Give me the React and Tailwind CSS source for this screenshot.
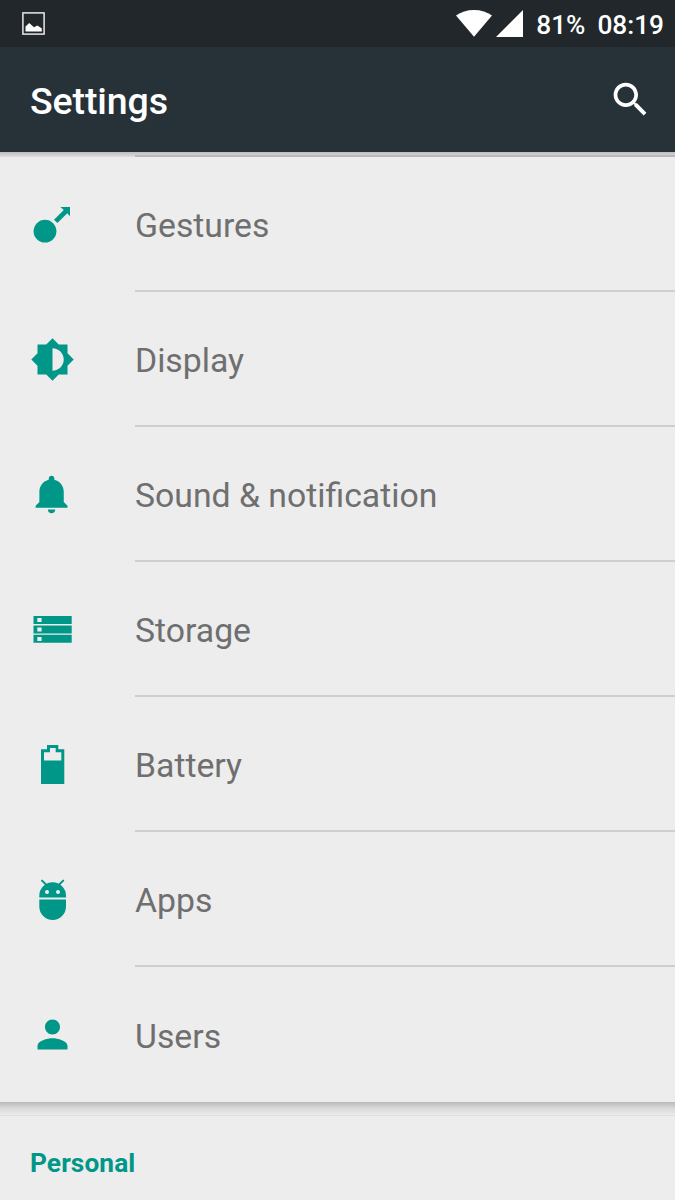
import React from "react";

function Icon({ children, unit = 45 }) {
  return (
    <svg className="size-[45px] shrink-0 fill-[#009688]" viewBox={`0 0 ${unit} ${unit}`} aria-hidden="true">
      {children}
    </svg>
  );
}

const items = [
  {
    label: "Gestures",
    icon: (
      <Icon>
        <circle cx="15" cy="29.2" r="11.4" />
        <path d="M30.4 5H40v9.3l-2.7-3L27.4 21.1 24 17.7 33.8 8.1z" />
      </Icon>
    ),
  },
  {
    label: "Display",
    icon: (
      <Icon unit={24}>
        <path d="M20 15.31L23.31 12 20 8.69V4h-4.69L12 .69 8.69 4H4v4.69L.69 12 4 15.31V20h4.69L12 23.31 15.31 20H20v-4.69zM12 18V6c3.31 0 6 2.69 6 6s-2.69 6-6 6z" />
      </Icon>
    ),
  },
  {
    label: "Sound & notification",
    icon: (
      <Icon unit={24}>
        <path d="M11.5 22c1.1 0 2-.9 2-2h-4c0 1.1.9 2 2 2zm6.5-6v-5.5c0-3.07-2.13-5.64-5-6.32V3.5c0-.83-.67-1.5-1.5-1.5S10 2.67 10 3.5v.68c-2.87.68-5 3.25-5 6.32V16l-2 2v1h17v-1l-2-2z" />
      </Icon>
    ),
  },
  {
    label: "Storage",
    icon: (
      <Icon>
        <path
          fillRule="evenodd"
          d="M3.5 9h38.2v8H3.5zM7.3 11v4h4.3v-4zM3.5 18.4h38.2v8H3.5zM7.3 20.4v4.2h4.3v-4.2zM3.5 27.8h38.2v8H3.5zM7.3 30v4h4.3v-4z"
        />
      </Icon>
    ),
  },
  {
    label: "Battery",
    icon: (
      <Icon>
        <path fillRule="evenodd" d="M17 3h11.3v4.2h6V42H11V7.2h6zM20 6v4.2h-6v8.2h17.3v-8.2h-5.6V6z" />
      </Icon>
    ),
  },
  {
    label: "Apps",
    icon: (
      <Icon>
        <path
          fillRule="evenodd"
          d="M9.3 20.4v-1.8a13.35 13.35 0 0 1 26.7 0v1.8zM15 15a2 2 0 1 0 4 0a2 2 0 1 0-4 0zM26 15a2 2 0 1 0 4 0a2 2 0 1 0-4 0z"
        />
        <path d="M9.3 22.4H36v7.2a13.35 13.35 0 0 1-26.7 0z" />
        <path className="stroke-[#009688]" strokeWidth="2" strokeLinecap="round" d="M12 3.6l4 3.8M33.2 3.6l-4 3.8" />
      </Icon>
    ),
  },
  {
    label: "Users",
    icon: (
      <Icon unit={24}>
        <path d="M12 12c2.21 0 4-1.79 4-4s-1.79-4-4-4-4 1.79-4 4 1.79 4 4 4zm0 2c-2.67 0-8 1.34-8 4v2h16v-2c0-2.66-5.33-4-8-4z" />
      </Icon>
    ),
  },
];

function StatusBar() {
  return (
    <div className="flex h-[47px] items-center bg-[#21272b] pl-[22px] pr-[11px] text-white">
      <svg className="size-[23px]" viewBox="0 0 23 23" aria-hidden="true">
        <rect x="0.9" y="0.9" width="21.2" height="21.2" fill="none" stroke="#e8e9ea" strokeWidth="1.5" />
        <path fill="#fff" d="M3.5 19.6v-5.2l3.7-3.4 4.8 4.2 3.4-1.8 4.4 3v3.2z" />
      </svg>
      <svg className="ml-auto h-[27px] w-[36px]" viewBox="0 0 36 27" aria-hidden="true">
        <path fill="#fff" d="M18 26.7L0 5.6C5 2 11 0 18 0s13 2 18 5.6z" />
      </svg>
      <svg className="ml-[4px] mr-[13px] size-[27px]" viewBox="0 0 27 27" aria-hidden="true">
        <path fill="#fff" d="M0 27L27 0v27z" />
      </svg>
      <span className="mr-[12px] pt-[3px] text-[26.25px] font-medium leading-none">81%</span>
      <span className="pt-[3px] text-[26.25px] font-medium leading-none">08:19</span>
    </div>
  );
}

export default function App() {
  return (
    <div className="flex h-[1200px] w-[675px] flex-col overflow-hidden bg-[#ededed] font-['Roboto',sans-serif]">
      <StatusBar />
      <header className="flex h-[105px] items-center justify-between bg-[#263238] pl-[30px] pr-[22.5px] text-white">
        <h1 className="pt-[4px] text-[37.5px] font-medium leading-none tracking-[-0.1px]">Settings</h1>
        <svg className="size-[45px] fill-white" viewBox="0 0 24 24" aria-label="Search">
          <path d="M15.5 14h-.79l-.28-.27C15.41 12.59 16 11.11 16 9.5 16 5.91 13.09 3 9.5 3S3 5.91 3 9.5 5.91 16 9.5 16c1.61 0 3.09-.59 4.23-1.57l.27.28v.79l5 4.99L20.49 19l-4.99-5zm-6 0C7.01 14 5 11.99 5 9.5S7.01 5 9.5 5 14 7.01 14 9.5 11.99 14 9.5 14z" />
        </svg>
      </header>
      <div className="flex h-[5px] flex-col justify-end bg-linear-to-b from-[#bebebe] to-[#dedede]">
        <div className="ml-[135px] h-[2px] bg-[#b9b9b9]" />
      </div>
      <ul className="flex flex-col">
        {items.map((item, i) => (
          <li key={item.label} className="flex h-[135px] pl-[30px]">
            <div className="flex w-[105px] items-center">{item.icon}</div>
            <div
              className={
                i < items.length - 1
                  ? "flex flex-1 items-center border-b-2 border-[#cfcfcf] pt-[4px]"
                  : "flex flex-1 items-center pt-[4px]"
              }
            >
              <span className="text-[33.75px] leading-none text-[#6f6f6f]">{item.label}</span>
            </div>
          </li>
        ))}
      </ul>
      <div className="h-[14px] border-b border-[#dfdfdf] bg-linear-to-b from-[#bababa] via-[#dadada] via-50% to-[#ebebeb]" />
      <h2 className="pl-[30px] pt-[34px] text-[26.25px] font-bold leading-none tracking-[0.1px] text-[#009688]">Personal</h2>
    </div>
  );
}
